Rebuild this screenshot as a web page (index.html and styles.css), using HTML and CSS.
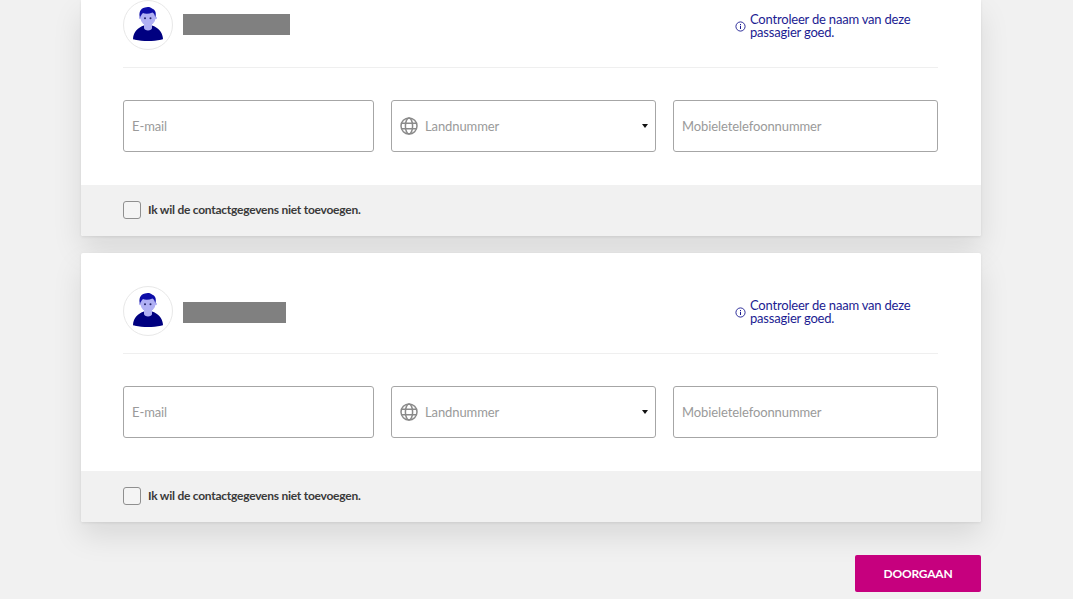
FILE: index.html
```html
<!DOCTYPE html>
<html lang="nl">
<head>
<meta charset="utf-8">
<title>Contactgegevens</title>
<link rel="stylesheet" href="styles.css">
</head>
<body>
<svg class="defs" width="0" height="0" aria-hidden="true">
  <defs>
    <symbol id="person" viewBox="1 1 48 48">
      <path fill="#000080" d="M10 38.500C10.500 32 15 27.500 21 25.500L29 25.500C35 27.500 39.500 32 40 38.500C40 39.500 39 39.500 38 39.800C30 41.500 20 41.500 12 39.800C11 39.500 10 39.500 10 38.500z"/>
      <path fill="#b0b0f4" d="M21 22h8v6c0 1.500-2 2.500-4 2.500s-4-1-4-2.500z"/>
      <ellipse cx="25" cy="17.500" rx="7.500" ry="8" fill="#b0b0f4"/>
      <circle cx="17.300" cy="18" r="1.300" fill="#b0b0f4"/>
      <circle cx="32.700" cy="18" r="1.300" fill="#b0b0f4"/>
      <circle cx="22" cy="18.300" r="1" fill="#222266"/>
      <circle cx="27.500" cy="18.300" r="1" fill="#222266"/>
      <path fill="#0d0da8" d="M17 18C15.500 13 17 8.500 22 7.500C24 6.500 28 6.800 29 8.500C32 9.500 33 12 32.800 15L32.300 17.500C31.800 15 31 13 29.500 12.500C26 14 22 14 20 13C18.500 14 17.800 16 17 18z"/>
    </symbol>
    <symbol id="info" viewBox="0 0 12 12">
      <circle cx="6" cy="6" r="5" fill="none" stroke="currentColor" stroke-width="1"/>
      <path d="M6 5.300v3.400M6 3.200v1.100" fill="none" stroke="currentColor" stroke-width="1.100"/>
    </symbol>
    <symbol id="globe" viewBox="0 0 18 18">
      <g fill="none" stroke="currentColor" stroke-width="1.500">
        <circle cx="9" cy="9" r="8"/>
        <ellipse cx="9" cy="9" rx="3.600" ry="8"/>
        <path d="M1.800 6.200h14.400M1.800 11.800h14.400"/>
      </g>
    </symbol>
  </defs>
</svg>
<main class="page">
  <section class="card card-scrolled">
    <div class="passenger">
      <div class="identity">
        <span class="avatar"><svg class="avatar-img"><use href="#person"/></svg></span>
        <span class="redacted redacted-long"></span>
      </div>
      <p class="notice"><svg class="notice-icon"><use href="#info"/></svg><span>Controleer de naam van deze passagier goed.</span></p>
    </div>
    <div class="fields">
      <label class="field"><span class="placeholder">E-mail</span></label>
      <label class="field"><svg class="globe"><use href="#globe"/></svg><span class="placeholder placeholder-grow">Landnummer</span><span class="caret"></span></label>
      <label class="field"><span class="placeholder">Mobieletelefoonnummer</span></label>
    </div>
    <div class="card-foot">
      <span class="checkbox"></span>
      <span class="check-label">Ik wil de contactgegevens niet toevoegen.</span>
    </div>
  </section>
  <section class="card">
    <div class="passenger">
      <div class="identity">
        <span class="avatar"><svg class="avatar-img"><use href="#person"/></svg></span>
        <span class="redacted redacted-short"></span>
      </div>
      <p class="notice"><svg class="notice-icon"><use href="#info"/></svg><span>Controleer de naam van deze passagier goed.</span></p>
    </div>
    <div class="fields">
      <label class="field"><span class="placeholder">E-mail</span></label>
      <label class="field"><svg class="globe"><use href="#globe"/></svg><span class="placeholder placeholder-grow">Landnummer</span><span class="caret"></span></label>
      <label class="field"><span class="placeholder">Mobieletelefoonnummer</span></label>
    </div>
    <div class="card-foot">
      <span class="checkbox"></span>
      <span class="check-label">Ik wil de contactgegevens niet toevoegen.</span>
    </div>
  </section>
  <div class="actions"><button class="continue" type="button">DOORGAAN</button></div>
</main>
</body>
</html>
```
FILE: styles.css
```css
* { box-sizing: border-box; }
html, body { margin: 0; height: 100%; overflow: hidden; }
body {
  background: #f1f1f1;
  font-family: Lato, "Noto Sans", sans-serif;
  color: #3c3c3c;
}
.defs { position: absolute; }
.page {
  width: 900px;
  margin-left: 81px;
  display: flex;
  flex-direction: column;
  gap: 17px;
}
.card {
  background: #fff;
  border-radius: 2px;
  box-shadow: 0 14px 30px rgba(0, 0, 0, 0.10), 0 1px 3px rgba(0, 0, 0, 0.08);
  padding-top: 33px;
}
.card-scrolled {
  padding-top: 0;
  border-radius: 0 0 2px 2px;
}
.passenger {
  margin: 0 43px 0 42px;
  height: 68px;
  display: flex;
  justify-content: space-between;
  border-bottom: 1px solid #efefef;
}
.identity {
  display: flex;
  gap: 10px;
  align-items: flex-start;
  height: 50px;
}
.avatar {
  width: 50px;
  height: 50px;
  border: 1px solid #e8e8e8;
  border-radius: 50%;
  background: #fff;
  display: block;
}
.avatar-img { width: 48px; height: 48px; display: block; }
.redacted { height: 21px; background: #808080; display: block; }
.redacted-long { width: 107px; margin-top: 14px; }
.redacted-short { width: 103px; margin-top: 16px; }
.notice {
  width: 203px;
  margin: 13px 0 0;
  display: flex;
  align-items: center;
  gap: 4px;
  color: #1c1c92;
  font-size: 13px;
  letter-spacing: -0.2px;
  line-height: 13px;
  height: 26px;
}
.notice-icon { width: 11px; height: 11px; flex: none; }
.fields {
  margin: 32px 43px 33px 42px;
  display: grid;
  grid-template-columns: 251px 265px 265px;
  column-gap: 17px;
}
.field {
  height: 52px;
  border: 1px solid #a6a6a6;
  border-radius: 3px;
  background: #fff;
  display: flex;
  align-items: center;
  padding: 0 8px;
  font-size: 13px;
  letter-spacing: -0.1px;
}
.placeholder { color: #9a9a9a; }
.placeholder-grow { flex: 1; }
.globe { width: 18px; height: 18px; color: #8a8a8a; margin-right: 7px; }
.caret {
  width: 0;
  height: 0;
  border-left: 3.500px solid transparent;
  border-right: 3.500px solid transparent;
  border-top: 4px solid #111;
  margin-right: -1px;
}
.card-foot {
  height: 51px;
  background: #f1f1f1;
  border-radius: 0 0 2px 2px;
  padding-left: 42px;
  display: flex;
  align-items: center;
  gap: 7px;
}
.checkbox {
  width: 18px;
  height: 18px;
  border: 1px solid #8f8f8f;
  border-radius: 3px;
  background: #f4f4f4;
  margin-bottom: 1px;
}
.check-label {
  font-size: 12px;
  font-weight: 700;
  letter-spacing: -0.25px;
  color: #3a3a3a;
  margin-bottom: 2px;
}
.actions {
  display: flex;
  justify-content: flex-end;
  margin-top: 16px;
}
.continue {
  width: 126px;
  height: 37px;
  border: 0;
  border-radius: 2px;
  background: #c6007e;
  color: #fff;
  font-family: Lato, sans-serif;
  font-weight: 700;
  font-size: 12px;
  letter-spacing: -0.2px;
}
```
